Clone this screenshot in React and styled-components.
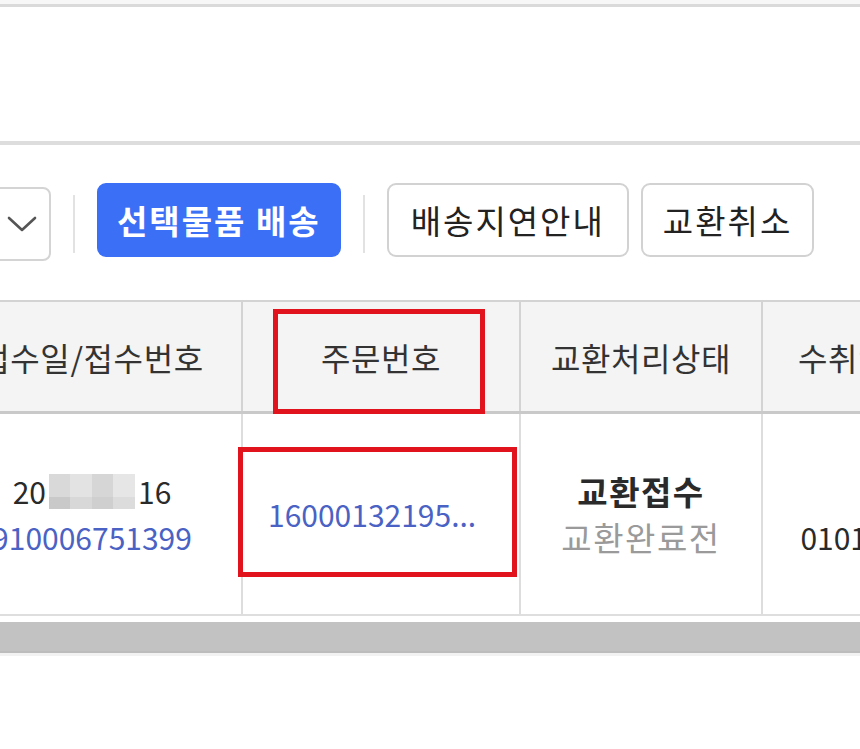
import React from 'react';
import styled, { createGlobalStyle } from 'styled-components';

const GlobalStyle = createGlobalStyle`
  html, body { margin: 0; padding: 0; background: #fff; overflow: hidden; }
  body { font-family: "Noto Sans CJK KR", "Noto Sans", sans-serif; color: #222; }
  * { box-sizing: border-box; }
`;

const Page = styled.div`
  width: 860px;
  height: 749px;
  overflow: hidden;
  background: #fff;
`;

const TopPanel = styled.div`
  height: 7px;
  background: #f7f7f7;
  border-bottom: 3px solid #dadada;
`;

const FilterArea = styled.div`
  height: 138px;
  border-bottom: 4px solid #dddddd;
`;

const Toolbar = styled.div`
  display: flex;
  align-items: flex-start;
  margin: 38px 0 0 -69px;
  height: 78px;
`;

const Select = styled.div`
  width: 120px;
  height: 74px;
  margin-top: 4px;
  border: 2px solid #d4d4d4;
  border-radius: 8px;
  background: #fff;
  display: flex;
  align-items: center;
  justify-content: flex-end;
  padding-right: 12px;
`;

const Sep = styled.div`
  width: 2px;
  height: 58px;
  margin: 12px 22px 0;
  background: #e2e2e2;
`;

const Button = styled.button`
  height: 74px;
  padding: 0 ${(p) => (p.$primary ? 18 : p.$pad || 22)}px;
  margin-right: ${(p) => p.$mr || 0}px;
  border-radius: 9px;
  font-family: "Noto Sans CJK KR", "Noto Sans", sans-serif;
  font-size: 33px;
  letter-spacing: 2px;
  cursor: pointer;
  white-space: nowrap;
  background: ${(p) => (p.$primary ? '#3a6ff6' : '#fff')};
  color: ${(p) => (p.$primary ? '#fff' : '#222')};
  border: ${(p) => (p.$primary ? '2px solid #3a6ff6' : '2px solid #d2d2d2')};
  font-weight: ${(p) => (p.$primary ? 700 : 400)};
`;

const Table = styled.div`
  margin: 39px 0 0 -57px;
  width: 1078px;
`;

const Row = styled.div`
  display: grid;
  grid-template-columns: 298px 278px 242px 260px;
  background: ${(p) => (p.$head ? '#f4f4f4' : '#fff')};
  border-top: ${(p) => (p.$head ? '2px solid #d3d3d3' : 'none')};
  border-bottom: ${(p) => (p.$head ? '3px solid #c9c9c9' : '2px solid #dedede')};
  height: ${(p) => (p.$head ? 114 : 202)}px;
`;

const Cell = styled.div`
  position: relative;
  display: flex;
  flex-direction: column;
  align-items: ${(p) => (p.$start ? 'flex-start' : 'center')};
  justify-content: center;
  padding-left: ${(p) => (p.$start ? 25 : 0)}px;
  border-left: ${(p) => (p.$first ? 'none' : `2px solid ${p.$head ? '#d3d3d3' : '#dddddd'}`)};
  font-size: ${(p) => (p.$head ? 32 : 31)}px;
  letter-spacing: ${(p) => (p.$head ? 0.6 : 0)}px;
  line-height: 46px;
  color: #333;
  white-space: nowrap;
`;

const Line = styled.div`
  color: ${(p) => (p.$tone === 'link' ? '#4a62c4' : p.$tone === 'muted' ? '#9a9a9a' : '#2a2a2a')};
  font-weight: ${(p) => (p.$bold ? 700 : 400)};
  font-size: ${(p) => (p.$num ? 30 : 33)}px;
  letter-spacing: ${(p) => (p.$num ? 0 : 1.5)}px;
  min-height: 46px;
  display: flex;
  align-items: center;
`;

const Mosaic = styled.span`
  display: inline-block;
  width: 86px;
  height: 35px;
  margin: 0 3px;
  background:
    linear-gradient(90deg, #d9d9d9 0 25%, #e3e3e3 25% 50%, #d6d6d6 50% 75%, #e6e6e6 75% 100%);
  position: relative;
  &::after {
    content: '';
    position: absolute;
    left: 0; right: 0; bottom: 0; height: 12px;
    background: linear-gradient(90deg, #c9c9c9 0 25%, #d8d8d8 25% 50%, #cfcfcf 50% 75%, #dcdcdc 75% 100%);
  }
`;

const Mark = styled.span`
  position: absolute;
  top: ${(p) => p.$t}px;
  left: ${(p) => p.$l}px;
  right: ${(p) => p.$r}px;
  bottom: ${(p) => p.$b}px;
  border: 5px solid #e1131c;
  pointer-events: none;
`;

const Scrollbar = styled.div`
  margin-top: 6px;
  height: 31px;
  background: #c2c2c2;
  border-bottom: 2px solid #bcbcbc;
  box-shadow: 0 3px 0 #f2f2f2;
`;

function Chevron() {
  return (
    <svg width="30" height="18" viewBox="0 0 30 18" fill="none">
      <path d="M2 3 L15 15 L28 3" stroke="#555" strokeWidth="2.6" strokeLinecap="round" strokeLinejoin="round" />
    </svg>
  );
}

export default function App() {
  return (
    <Page>
      <GlobalStyle />
      <TopPanel />
      <FilterArea />
      <Toolbar>
        <Select>
          <Chevron />
        </Select>
        <Sep />
        <Button $primary>선택물품 배송</Button>
        <Sep />
        <Button $mr={12}>배송지연안내</Button>
        <Button $pad={20}>교환취소</Button>
      </Toolbar>
      <Table>
        <Row $head>
          <Cell $head $first>접수일/접수번호</Cell>
          <Cell $head>
            주문번호
            <Mark $t={7} $l={30} $r={34} $b={-3} />
          </Cell>
          <Cell $head>교환처리상태</Cell>
          <Cell $head>수취인 연락처</Cell>
        </Row>
        <Row>
          <Cell $first>
            <Line $num>20<Mosaic />16</Line>
            <Line $num $tone="link">910006751399</Line>
          </Cell>
          <Cell $start>
            <Line $num $tone="link">16000132195...</Line>
            <Mark $t={33} $l={-5} $r={2} $b={37} />
          </Cell>
          <Cell>
            <Line $bold>교환접수</Line>
            <Line $tone="muted">교환완료전</Line>
          </Cell>
          <Cell>
            <Line>&nbsp;</Line>
            <Line $num>01012345678</Line>
          </Cell>
        </Row>
      </Table>
      <Scrollbar />
    </Page>
  );
}
